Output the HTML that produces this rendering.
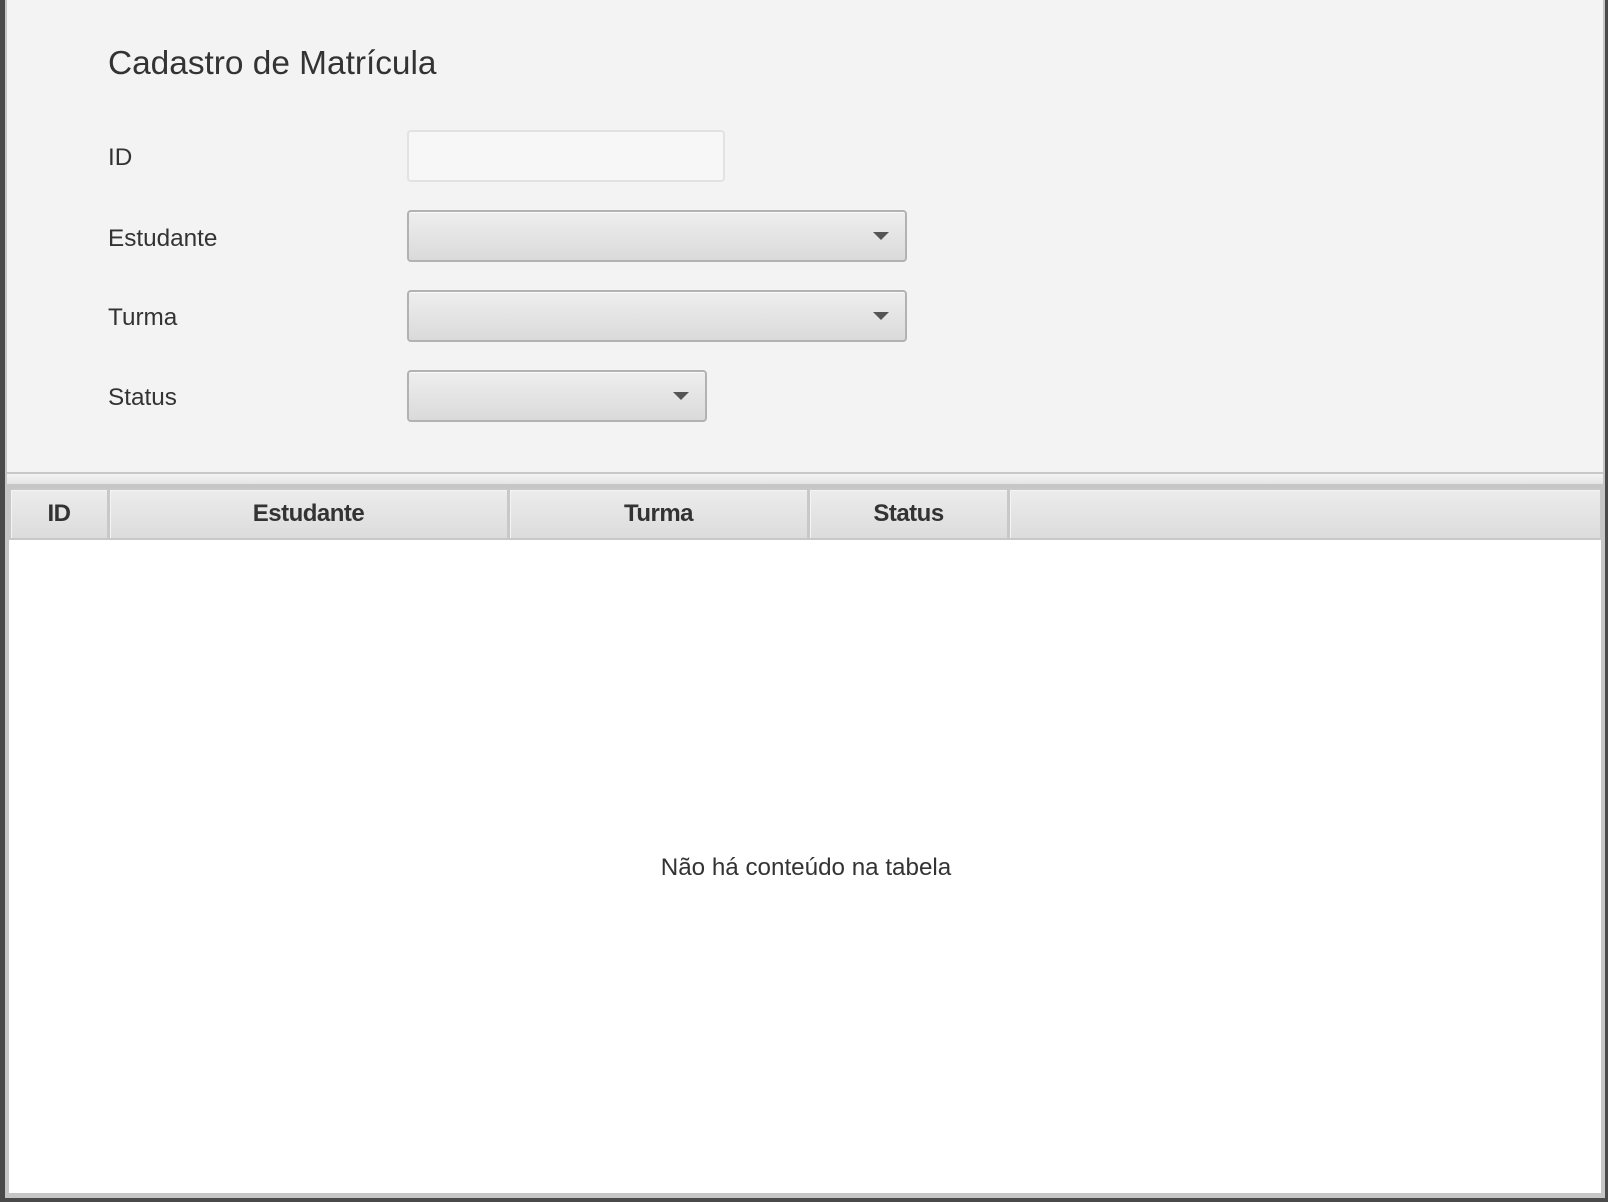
<!DOCTYPE html>
<html><head><meta charset="utf-8"><style>
*{margin:0;padding:0;box-sizing:border-box}
html,body{width:1608px;height:1202px;overflow:hidden;background:#4a4a4a}
body{position:relative;font-family:"Liberation Sans",sans-serif;color:#333}
.a{position:absolute}
.t{position:absolute;line-height:1;white-space:nowrap}
.combo{position:absolute;border:2px solid #b2b2b2;border-radius:4px;background:linear-gradient(#eeeeee,#dadada);box-shadow:inset 0 1px 0 #fafafa}
.arr{position:absolute;right:16px;top:20px;width:0;height:0;border-left:8px solid transparent;border-right:8px solid transparent;border-top:8px solid #555}
.h{position:absolute;top:488px;height:52px;background:linear-gradient(#ececec,#dcdcdc);border:2px solid #c8c8c8;border-right:1px solid #c8c8c8;box-shadow:inset 1px 1px 0 #f4f4f4;font-weight:bold;font-size:24px;text-align:center;line-height:48px;letter-spacing:-0.5px}
</style></head><body>
<div class="a" style="left:5px;top:0;width:1600px;height:1198px;background:#c6c6c6"></div>
<div class="a" style="left:7px;top:0;width:1596px;height:472px;background:#f3f3f3"></div>
<div class="a" style="left:7px;top:472px;width:1596px;height:2px;background:#c8c8c8"></div>
<div class="a" style="left:7px;top:474px;width:1596px;height:10px;background:linear-gradient(#f4f4f4,#e4e4e4)"></div>
<div class="a" style="left:9px;top:540px;width:1592px;height:653px;background:#fff"></div>

<div class="t" style="left:108px;top:47px;font-size:33.4px;color:#333">Cadastro de Matrícula</div>
<div class="t" style="left:108px;top:146px;font-size:24.3px">ID</div>
<div class="t" style="left:108px;top:227px;font-size:24.3px">Estudante</div>
<div class="t" style="left:108px;top:306px;font-size:24.3px">Turma</div>
<div class="t" style="left:108px;top:386px;font-size:24.3px">Status</div>

<div class="a" style="left:407px;top:130px;width:318px;height:52px;border:2px solid #e2e2e2;border-radius:4px;background:#f7f7f7"></div>
<div class="combo" style="left:407px;top:210px;width:500px;height:52px"><div class="arr"></div></div>
<div class="combo" style="left:407px;top:290px;width:500px;height:52px"><div class="arr"></div></div>
<div class="combo" style="left:407px;top:370px;width:300px;height:52px"><div class="arr"></div></div>

<div class="h" style="left:9px;width:99px">ID</div>
<div class="h" style="left:108px;width:400px">Estudante</div>
<div class="h" style="left:508px;width:300px">Turma</div>
<div class="h" style="left:808px;width:200px">Status</div>
<div class="h" style="left:1008px;width:593px"></div>

<div class="t" style="left:606px;width:400px;text-align:center;top:856px;font-size:24.2px">Não há conteúdo na tabela</div>
</body></html>
